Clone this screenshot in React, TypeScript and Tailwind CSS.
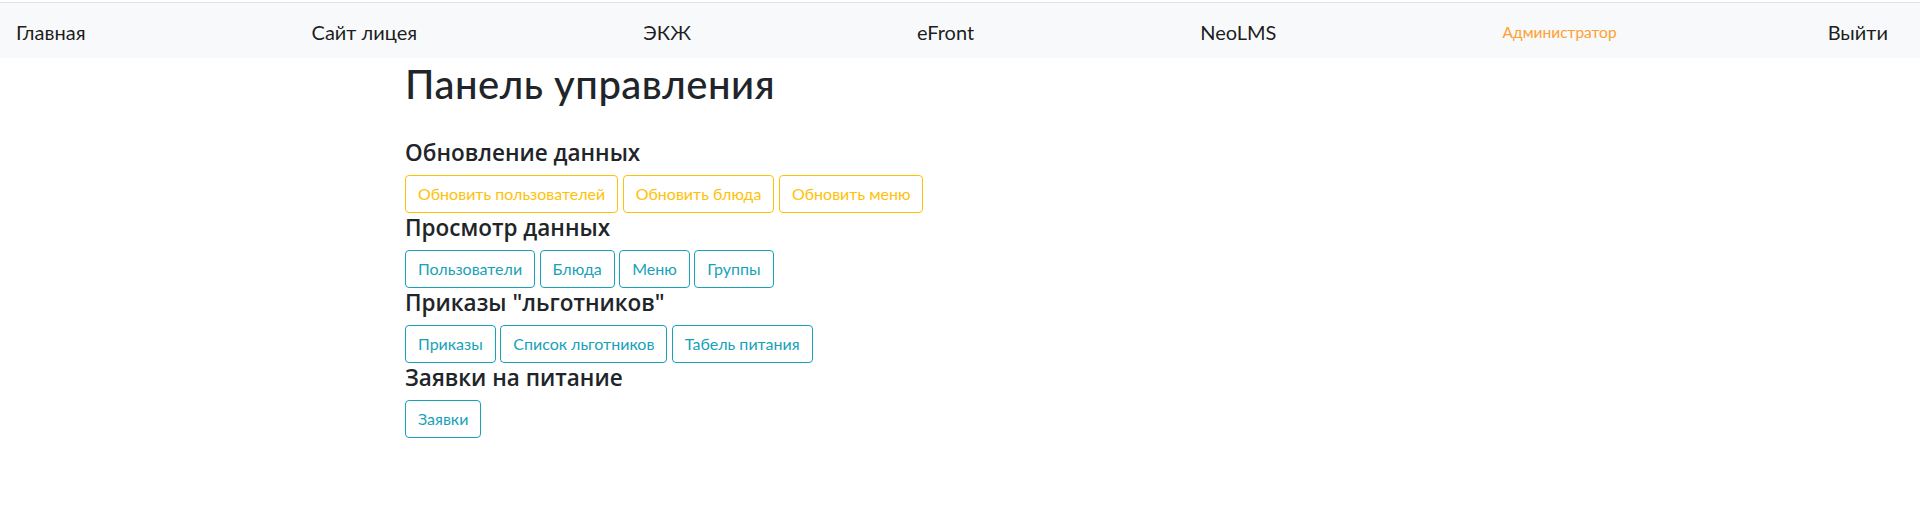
const navLinks = ['Главная', 'Сайт лицея', 'ЭКЖ', 'eFront', 'NeoLMS'];

const sections = [
  {
    title: 'Обновление данных',
    tone: 'warning',
    buttons: ['Обновить пользователей', 'Обновить блюда', 'Обновить меню'],
  },
  {
    title: 'Просмотр данных',
    tone: 'info',
    buttons: ['Пользователи', 'Блюда', 'Меню', 'Группы'],
  },
  {
    title: 'Приказы "льготников"',
    tone: 'info',
    buttons: ['Приказы', 'Список льготников', 'Табель питания'],
  },
  {
    title: 'Заявки на питание',
    tone: 'info',
    buttons: ['Заявки'],
  },
];

function OutlineButton({ label, tone }: { label: string; tone: string }) {
  const color =
    tone === 'warning'
      ? 'border-[#ffc107] text-[#ffc107] hover:bg-[#ffc107] hover:text-[#212529]'
      : 'border-[#17a2b8] text-[#17a2b8] hover:bg-[#17a2b8] hover:text-white';
  return (
    <button
      className={`rounded-[4px] border px-3 py-[6px] text-base leading-6 whitespace-nowrap ${color}`}
    >
      {label}
    </button>
  );
}

export default function App() {
  return (
    <div className="min-h-[517px] bg-white pt-[2px] font-['Lato',sans-serif] text-[#212529]">
      <nav className="flex h-[56px] items-center justify-between border-t border-[#dee2e6] bg-[#f8f9fa] pt-[3px] pr-[32px] pl-4">
        {navLinks.map((l) => (
          <a key={l} href="#" className="text-[20px] leading-[30px] whitespace-nowrap text-black/90">
            {l}
          </a>
        ))}
        <span className="-mr-[15px] text-[15.5px] leading-6 whitespace-nowrap text-[#ffa031]">
          Администратор
        </span>
        <a href="#" className="text-[20px] leading-[30px] whitespace-nowrap text-black/90">
          Выйти
        </a>
      </nav>

      <main className="mx-auto w-[1140px] px-[15px]">
        <h1 className="mt-[2px] text-[40px] leading-[48px] font-medium tracking-[0.5px] whitespace-nowrap">
          Панель управления
        </h1>

        <div className="mt-[33px] flex flex-col gap-[3px]">
          {sections.map((s) => (
            <section key={s.title}>
              <h5 className="mb-[10px] font-['Open_Sans',sans-serif] text-[22.5px] leading-6 font-semibold">
                {s.title}
              </h5>
              <div className="flex gap-[4.5px]">
                {s.buttons.map((b) => (
                  <OutlineButton key={b} label={b} tone={s.tone} />
                ))}
              </div>
            </section>
          ))}
        </div>
      </main>
    </div>
  );
}
